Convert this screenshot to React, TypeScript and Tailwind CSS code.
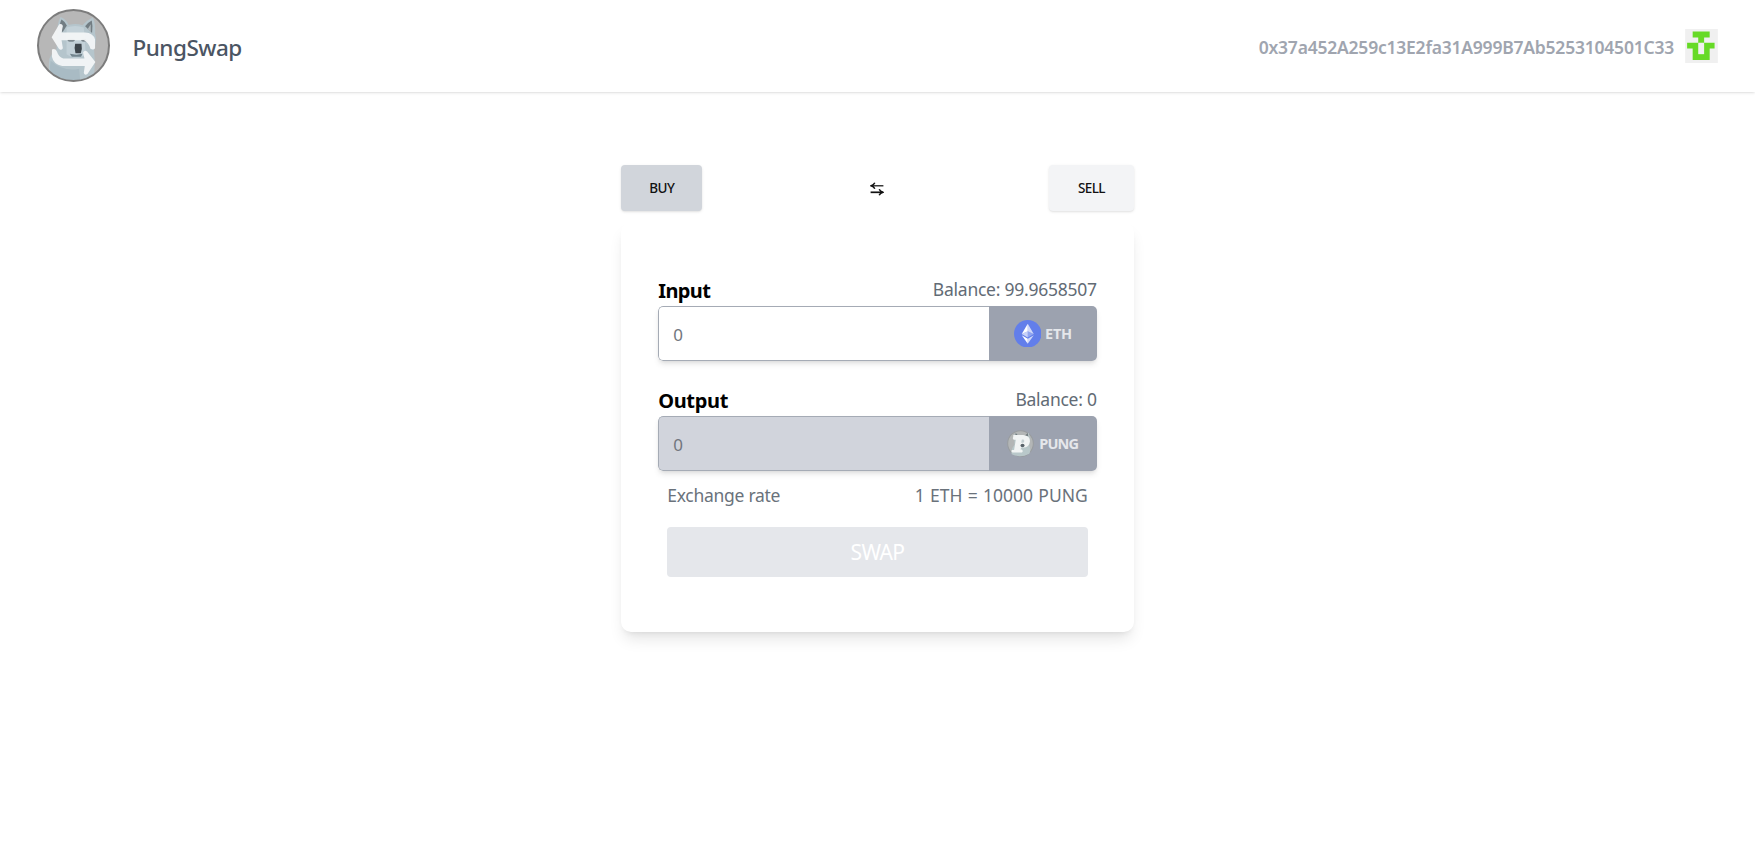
import type { ReactNode } from 'react';

function DogLogo() {
  return (
    <svg viewBox="19 14 220 220" className="h-[73px] w-[73px] shrink-0" aria-hidden="true">
      <defs>
        <clipPath id="logo-clip">
          <circle cx="129" cy="124" r="106" />
        </clipPath>
        <filter id="logo-soft" x="-5%" y="-5%" width="110%" height="110%">
          <feGaussianBlur stdDeviation="2.4" />
        </filter>
      </defs>
      <circle cx="129" cy="124" r="106" fill="#b7b7b7" />
      <g clipPath="url(#logo-clip)">
        <g filter="url(#logo-soft)">
          <path
            d="M80 100 Q78 58 90 38 Q106 44 115 62 Q136 56 156 63 Q170 48 187 39 Q196 58 194 88 Q200 106 191 135 Q196 190 188 240 H70 Q50 205 56 165 Q64 145 78 135Z"
            fill="#b5c5cc"
          />
          <path d="M87 66 Q88 54 93 46 Q103 52 109 64 L96 84Z" fill="#727d83" />
          <path d="M164 66 Q174 54 184 49 Q188 66 185 86Z" fill="#727d83" />
          <path d="M172 74 L181 60 L181 84Z" fill="#b3bbbf" />
          <path d="M108 70 Q134 60 160 70 L166 150 Q140 172 108 150Z" fill="#c3d1d8" />
          <path d="M60 170 Q100 205 146 194 L150 240 H74 Q52 212 60 170Z" fill="#a9bbc4" />
          <ellipse cx="122" cy="108" rx="11" ry="4" fill="#59666d" />
          <ellipse cx="160" cy="108" rx="8" ry="4" fill="#59666d" />
          <path d="M134 119 H153 Q156 134 151 147 H135 Q130 132 134 119Z" fill="#3c454b" />
          <path d="M118 149 Q138 154 156 149 L152 158 H124Z" fill="#72848d" />
        </g>
        <g fill="#f3f6f7" fillOpacity=".95">
          <path d="M63 99 L86 60 Q95 57 97 65 L93 85 H164 Q188 86 194 106 V132 Q190 139 180 134 Q175 114 160 108 H93 L97 132 Q92 140 85 134Z" />
          <path d="M64 136 Q74 132 79 142 Q84 158 98 163 H162 L158 145 Q162 136 170 142 L195 174 L171 210 Q163 215 160 207 L163 186 H95 Q68 180 64 158Z" />
        </g>
      </g>
      <circle cx="129" cy="124" r="107" fill="none" stroke="#7c7c7c" strokeWidth="6" />
    </svg>
  );
}

function Identicon() {
  return (
    <svg viewBox="0 0 100 104" className="ml-[11px] h-[34px] w-[33px] shrink-0" aria-hidden="true">
      <rect width="100" height="104" fill="#f0f0f0" />
      <path d="M23 8H75V26H58V42H90V60H75V95H23V60H6V42H40V26H23Z" fill="#66da26" />
      <rect x="40" y="42" width="18" height="35" fill="#f0f0f0" />
    </svg>
  );
}

function EthIcon() {
  return (
    <svg viewBox="0 0 32 32" className="h-[27.5px] w-[27.5px] shrink-0" aria-hidden="true">
      <circle cx="16" cy="16" r="16" fill="#627eea" />
      <g fill="#fff">
        <path fillOpacity=".7" d="M16 4.5v8.6l7 3.3z" />
        <path d="M16 4.5 9 16.4l7-3.3z" />
        <path fillOpacity=".7" d="M16 21.7v5.8l7-9.8z" />
        <path d="M16 27.5v-5.8l-7-4z" />
        <path fillOpacity=".3" d="m16 20.4 7-4-7-3.2z" />
        <path fillOpacity=".65" d="m9 16.4 7 4v-7.2z" />
      </g>
    </svg>
  );
}

function PungIcon() {
  return (
    <svg viewBox="0 0 80 80" className="h-[27px] w-[27px] shrink-0" aria-hidden="true">
      <circle cx="40" cy="40" r="38" fill="#b3b6b6" stroke="#989c9f" strokeWidth="3" />
      <path d="M14 72Q10 58 22 44L22 12Q30 8 36 18Q46 14 54 18L64 8Q70 26 66 46Q72 62 66 70Q40 84 14 72Z" fill="#b9c8ca" />
      <path d="M24 17l2-8 8 8zM53 16l9-7 1 10z" fill="#747d81" />
      <path
        d="M19 20Q16 18 20 15H48Q68 17 68 33Q66 51 48 52H42L40 58H44Q49 63 44 67H16Q11 63 15 59H21L26 29H20Q15 25 19 20Z"
        fill="#f1f4f4"
      />
      <path d="M44 28H49Q54 32 49 38H42Z" fill="#c3ced1" />
      <ellipse cx="46" cy="46" rx="6" ry="5" fill="#59636a" />
    </svg>
  );
}

function SwapArrows() {
  return (
    <svg viewBox="0 0 14 14" className="mt-[3px] ml-[2px] h-[14px] w-[14px]" fill="none" stroke="#111" aria-hidden="true">
      <path d="M1.3 3.8H13.4" strokeWidth="1.25" />
      <path d="M4.8 .8Q3.8 3 1.2 3.8Q3.8 4.6 4.8 6.8" strokeWidth="1.5" />
      <path d="M.6 10.3H12.7" strokeWidth="1.7" />
      <path d="M9.2 7.3Q10.2 9.5 12.8 10.3Q10.2 11.1 9.2 13.3" strokeWidth="1.5" />
    </svg>
  );
}

type FieldProps = {
  label: ReactNode;
  balance: string;
  fill: string;
  token: ReactNode;
};

function TokenField({ label, balance, fill, token }: FieldProps) {
  return (
    <div className="flex flex-col">
      <div className="flex h-[28.5px] items-start justify-between">
        {label}
        <span className="text-[17.5px] leading-[23px] tracking-[-0.25px] text-[#626b75]">{balance}</span>
      </div>
      <div className="flex h-[55px] w-full overflow-hidden rounded-[5px] shadow-md">
        <div className={`flex flex-1 items-center rounded-l-[5px] border border-r-0 border-[#a5abb5] pl-[14px] text-[17px] text-[#71767e] ${fill}`}>
          <span className="pt-[2px]">0</span>
        </div>
        <div className="flex w-[108px] items-center justify-center bg-[#9ca2af] text-[14.5px] font-bold text-gray-200">
          {token}
        </div>
      </div>
    </div>
  );
}

export default function App() {
  return (
    <div className="min-h-[861px] bg-white font-['Noto_Sans','Open_Sans',sans-serif]">
      <header className="flex h-[91.5px] items-center justify-between bg-white pr-[37px] pl-[36.5px] shadow">
        <div className="flex items-center">
          <DogLogo />
          <span className="ml-[23px] pt-[4px] text-[22.5px] leading-7 font-medium tracking-[-0.5px] text-[#4b5563]">PungSwap</span>
        </div>
        <div className="flex items-center">
          <span className="pt-[2px] text-[17.5px] leading-6 font-semibold tracking-[-0.22px] text-[#a0a5af]">
            0x37a452A259c13E2fa31A999B7Ab5253104501C33
          </span>
          <Identicon />
        </div>
      </header>

      <main className="mx-auto flex w-[512.5px] flex-col pt-[73px]">
        <div className="flex items-center justify-between">
          <button className="h-[46px] w-[81px] rounded-[4px] bg-[#d1d5db] pt-px text-[13.5px] font-medium tracking-[-0.5px] text-[#111] shadow">BUY</button>
          <SwapArrows />
          <button className="h-[46px] w-[84.5px] rounded-[4px] bg-gray-100 pt-px text-[13.5px] font-medium tracking-[-0.6px] text-[#111] shadow">SELL</button>
        </div>

        <section className="mt-[11px] h-[410px] rounded-[10px] bg-white px-[37px] pt-[56px] shadow-lg">
          <TokenField
            label={<span className="text-[20px] leading-[26px] font-bold tracking-[-0.6px] text-black">Input</span>}
            balance="Balance: 99.9658507"
            fill="bg-white"
            token={
              <>
                <EthIcon />
                <span className="ml-[4px] tracking-[-0.2px]">ETH</span>
              </>
            }
          />
          <div className="mt-[26.5px]">
            <TokenField
              label={<span className="text-[20px] leading-[26px] font-bold tracking-[-0.35px] text-black">Output</span>}
              balance="Balance: 0"
              fill="bg-[#d1d4dc]"
              token={
                <>
                  <PungIcon />
                  <span className="ml-[5px] tracking-[-0.8px]">PUNG</span>
                </>
              }
            />
          </div>
          <div className="mt-[11.5px] flex justify-between px-[9px] text-[17.5px] leading-[24px] text-[#6a727b]">
            <span className="tracking-[-0.28px]">Exchange rate</span>
            <span className="[word-spacing:0.7px]">1 ETH = 10000 PUNG</span>
          </div>
          <div className="mt-[20px] px-[9px]">
            <button className="h-[50px] w-full rounded-[4px] bg-[#e5e7eb] pt-[2px] text-[21px] tracking-[-0.6px] text-white">SWAP</button>
          </div>
        </section>
      </main>
    </div>
  );
}
